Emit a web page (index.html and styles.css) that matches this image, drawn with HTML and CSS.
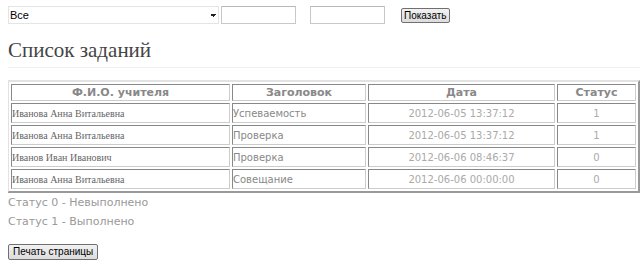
FILE: index.html
```html
<!DOCTYPE html>
<html lang="ru">
<head>
    <meta charset="UTF-8">
    <title>Список заданий</title>
    <link rel="stylesheet" href="styles.css">
</head>
<body>
    <form class="filter">
        <select class="teacher-select">
            <option>Все</option>
        </select>
        <input type="text" class="date-input">
        <input type="text" class="date-input date-to">
        <button type="button" class="btn show-btn">Показать</button>
    </form>

    <h2 class="page-title">Список заданий</h2>

    <table class="tasks" border="1">
        <tr>
            <th class="col-name">Ф.И.О. учителя</th>
            <th class="col-title">Заголовок</th>
            <th class="col-date">Дата</th>
            <th class="col-status">Статус</th>
        </tr>
        <tr>
            <td class="name">Иванова Анна Витальевна</td>
            <td class="title">Успеваемость</td>
            <td class="date">2012-06-05 13:37:12</td>
            <td class="status">1</td>
        </tr>
        <tr>
            <td class="name">Иванова Анна Витальевна</td>
            <td class="title">Проверка</td>
            <td class="date">2012-06-05 13:37:12</td>
            <td class="status">1</td>
        </tr>
        <tr>
            <td class="name">Иванов Иван Иванович</td>
            <td class="title">Проверка</td>
            <td class="date">2012-06-06 08:46:37</td>
            <td class="status">0</td>
        </tr>
        <tr>
            <td class="name">Иванова Анна Витальевна</td>
            <td class="title">Совещание</td>
            <td class="date">2012-06-06 00:00:00</td>
            <td class="status">0</td>
        </tr>
    </table>

    <p class="legend">Статус 0 - Невыполнено</p>
    <p class="legend">Статус 1 - Выполнено</p>

    <button type="button" class="btn print-btn">Печать страницы</button>
</body>
</html>
```

FILE: styles.css
```css
body {
    margin: 6px 2px 0 8px;
    font-family: "DejaVu Sans", Verdana, sans-serif;
    font-size: 11px;
    color: #999;
    background: #fff;
}
.filter {
    display: flex;
    align-items: center;
    height: 18px;
    margin: 0;
}
.teacher-select {
    width: 211px;
    height: 18px;
    margin: 0 2px 0 0;
    padding: 0 0 0 1px;
    font-family: "Liberation Sans", Arial, sans-serif;
    font-size: 11px;
    color: #000;
    border: 1px solid #e4e4e4;
    border-radius: 0;
    background: #fff;
    appearance: none;
    background-image: linear-gradient(45deg, transparent 50%, #222 50%), linear-gradient(-45deg, transparent 50%, #222 50%);
    background-position: 201px 7px, 204px 7px;
    background-size: 3px 3px;
    background-repeat: no-repeat;
}
.date-input {
    width: 75px;
    height: 18px;
    box-sizing: border-box;
    margin: 0;
    padding: 0 2px;
    border: 1px solid #c8c8c8;
    border-top-color: #b8b8b8;
}
.date-to {
    margin-left: 14px;
}
.btn {
    font-family: "Liberation Sans", Arial, sans-serif;
    font-size: 10px;
    color: #000;
    height: 15px;
    padding: 0 2px;
    border: 1px solid #707070;
    border-radius: 2px;
    background: linear-gradient(#f2f2f2, #dcdcdc);
    line-height: 12px;
}
.show-btn {
    margin-left: 16px;
    margin-top: 1px;
}
.page-title {
    margin: 14px 0 0;
    padding-bottom: 4px;
    font-family: "Liberation Serif", Georgia, serif;
    font-size: 21px;
    font-weight: normal;
    color: #444;
    border-bottom: 1px solid #f0f0f0;
}
.tasks {
    width: 633px;
    margin: 12px 0 0 -1px;
    border: 2px solid;
    border-color: #e2e2e2 #999 #999 #e2e2e2;
    border-spacing: 2px;
}
.tasks th,
.tasks td {
    border: 1px solid #888;
    border-right-color: #ccc;
    border-bottom-color: #ccc;
    padding: 0 1px;
}
.tasks th {
    font-weight: bold;
    color: #888;
    text-align: center;
    height: 15px;
}
.col-name { width: 215px; }
.col-title { width: 130px; }
.col-date { width: 183px; }
.tasks td {
    height: 18px;
    font-size: 10px;
}
.tasks .name {
    font-family: "Liberation Serif", "Times New Roman", serif;
    color: #666;
    padding-left: 0;
}
.tasks .title {
    color: #888;
    padding-left: 0;
}
.tasks .date,
.tasks .status {
    text-align: center;
    color: #aaa;
}
.legend {
    margin: 2px 0 0;
    line-height: 15px;
}
.legend + .legend {
    margin-top: 4px;
}
.print-btn {
    margin-top: 15px;
    margin-left: 0;
    height: 16px;
    padding: 0 4px;
}
```
